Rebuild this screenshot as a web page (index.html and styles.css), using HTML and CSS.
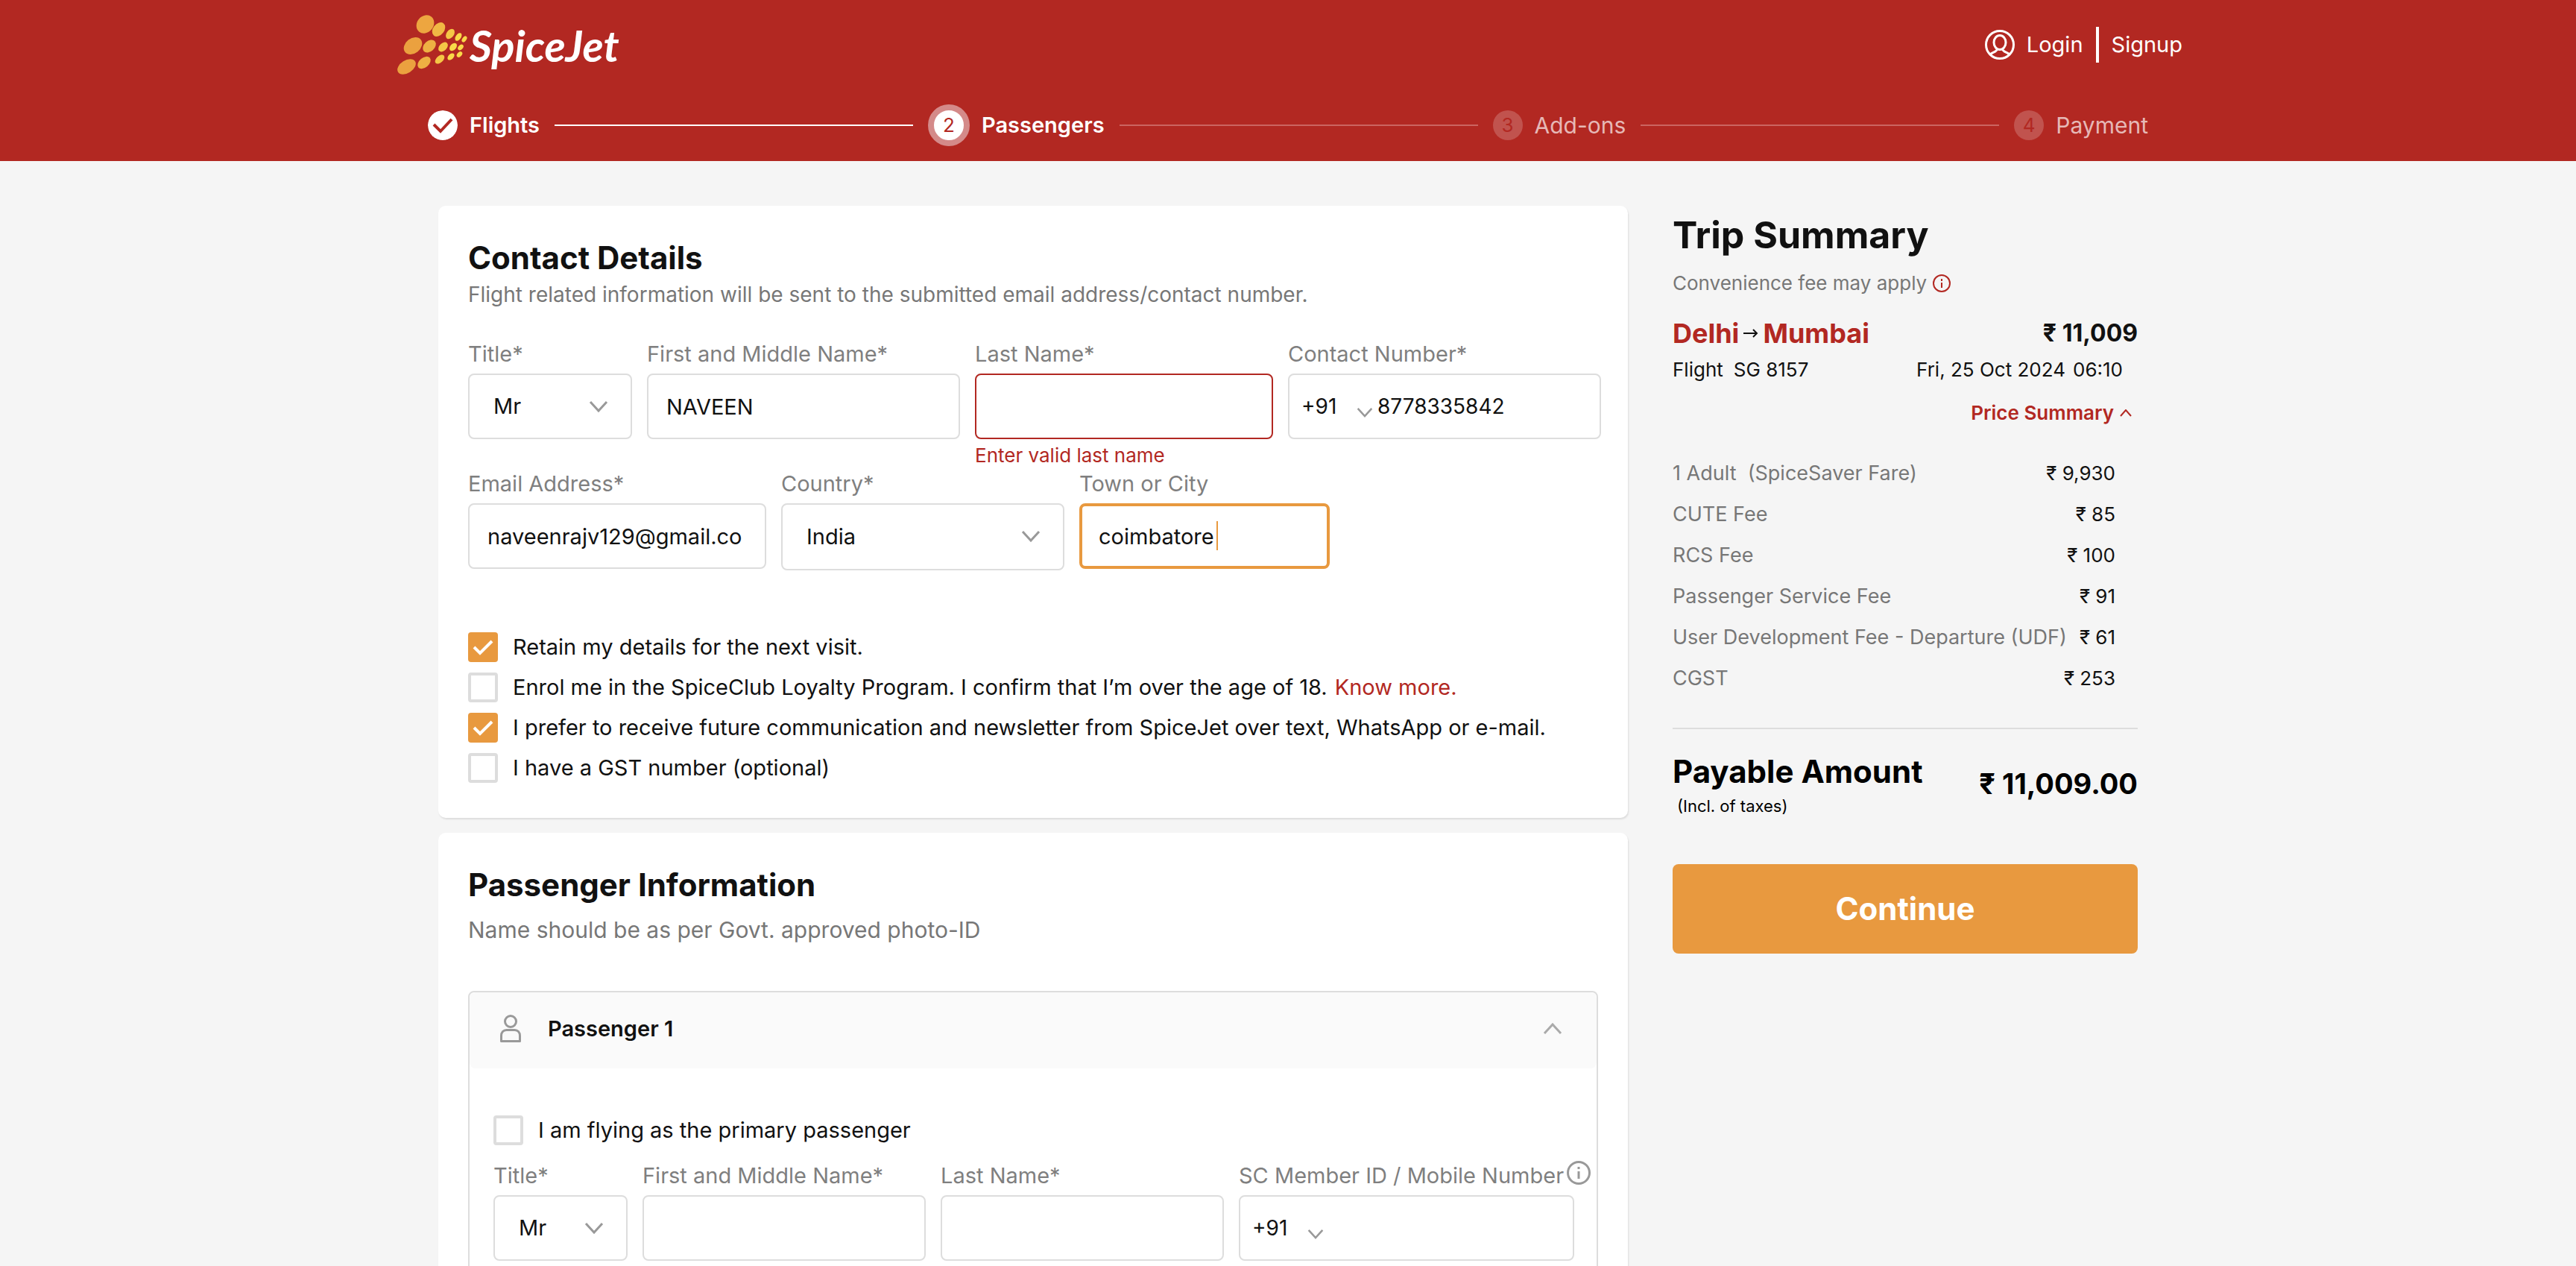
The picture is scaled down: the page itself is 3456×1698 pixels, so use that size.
FILE: index.html
```html
<!DOCTYPE html>
<html lang="en">
<head>
<meta charset="utf-8">
<title>SpiceJet - Passengers</title>
<link rel="stylesheet" href="styles.css">
</head>
<body>
<header class="site-header">
  <div class="topbar">
    <a class="logo" href="#" aria-label="SpiceJet home">
      <svg viewBox="0 0 300 96" aria-hidden="true">
        <g fill="#eba13f">
          <ellipse cx="38.500" cy="20.500" rx="13" ry="11" fill="#eda640" transform="rotate(-50 38.500 20.500)"/>
          <ellipse cx="22" cy="49.500" rx="13.500" ry="10" transform="rotate(-38 22 49.500)"/>
          <ellipse cx="13.500" cy="77.500" rx="13.500" ry="8.500" transform="rotate(-32 13.500 77.500)"/>
        </g>
        <g fill="#eeb043">
          <ellipse cx="56.500" cy="27.500" rx="10.500" ry="7.500" fill="#f1b844" transform="rotate(-52 56.500 27.500)"/>
          <ellipse cx="44" cy="50" rx="10" ry="7" transform="rotate(-42 44 50)"/>
          <ellipse cx="37" cy="72" rx="10" ry="6.500" transform="rotate(-40 37 72)"/>
        </g>
        <g fill="#f4c746">
          <ellipse cx="72" cy="33.500" rx="7.500" ry="5" transform="rotate(-55 72 33.500)"/>
          <ellipse cx="62.500" cy="51" rx="7.500" ry="5" transform="rotate(-45 62.500 51)"/>
          <ellipse cx="58" cy="67.500" rx="7.500" ry="4.500" transform="rotate(-42 58 67.500)"/>
        </g>
        <g fill="#f9d949">
          <ellipse cx="83" cy="37.500" rx="6" ry="3.500" transform="rotate(-55 83 37.500)"/>
          <ellipse cx="91" cy="40.500" rx="4.500" ry="2.800" transform="rotate(-55 91 40.500)"/>
          <ellipse cx="76" cy="51" rx="6" ry="4" transform="rotate(-48 76 51)"/>
          <ellipse cx="86" cy="51.500" rx="4.500" ry="3" transform="rotate(-48 86 51.500)"/>
          <ellipse cx="73" cy="64" rx="5.500" ry="3.500" transform="rotate(-45 73 64)"/>
          <ellipse cx="84.500" cy="61" rx="4.500" ry="3" transform="rotate(-48 84.500 61)"/>
        </g>
        <text class="logo-text" x="98" y="71">SpiceJet</text>
      </svg>
    </a>
    <nav class="account">
      <a class="account-link" href="#">
        <svg class="user-icon" viewBox="0 0 40 40" aria-hidden="true"><g fill="none" stroke="#fff" stroke-width="3"><circle cx="20" cy="20" r="18.500"/><ellipse cx="20" cy="17" rx="8" ry="9.500"/><path d="M7 33c3-3 9-3 10-8M33 33c-3-3-9-3-10-8"/></g></svg>
        Login
      </a>
      <span class="account-divider"></span>
      <a class="account-link" href="#">Signup</a>
    </nav>
  </div>
  <ol class="steps">
    <li class="step step-done">
      <svg class="step-dot" viewBox="0 0 40 40" aria-hidden="true"><circle cx="20" cy="20" r="20" fill="#fff"/><path d="M8 19l9 9 15-16" fill="none" stroke="#b22822" stroke-width="4"/></svg>
      <span class="step-name">Flights</span><span class="step-line"></span>
    </li>
    <li class="step step-current">
      <span class="step-dot">2</span><span class="step-name">Passengers</span><span class="step-line"></span>
    </li>
    <li class="step">
      <span class="step-dot">3</span><span class="step-name">Add-ons</span><span class="step-line"></span>
    </li>
    <li class="step step-last">
      <span class="step-dot">4</span><span class="step-name">Payment</span>
    </li>
  </ol>
</header>

<main class="layout">
  <form class="forms">
    <section class="card">
      <h2 class="card-title">Contact Details</h2>
      <p class="card-note">Flight related information will be sent to the submitted email address/contact number.</p>
      <div class="row row-contact">
        <div class="field">
          <label for="c-title">Title*</label>
          <div class="pick">
            <select class="control" id="c-title"><option>Mr</option></select>
            <svg class="chevron" viewBox="0 0 26 16" aria-hidden="true"><path d="M2 2l11 12L24 2"/></svg>
          </div>
        </div>
        <div class="field">
          <label for="c-first">First and Middle Name*</label>
          <input class="control" id="c-first" type="text" value="NAVEEN">
        </div>
        <div class="field">
          <label for="c-last">Last Name*</label>
          <input class="control control-invalid" id="c-last" type="text" value="" aria-describedby="c-last-error">
          <p class="field-error" id="c-last-error">Enter valid last name</p>
        </div>
        <div class="field">
          <label for="c-phone">Contact Number*</label>
          <div class="control phone">
            <div class="phone-code">
              <select aria-label="Country code"><option>+91</option></select>
              <svg class="chevron chevron-small" viewBox="0 0 26 16" aria-hidden="true"><path d="M2 2l11 12L24 2"/></svg>
            </div>
            <input id="c-phone" type="tel" value="8778335842">
          </div>
        </div>
      </div>
      <div class="row row-address">
        <div class="field">
          <label for="c-email">Email Address*</label>
          <input class="control" id="c-email" type="text" value="naveenrajv129@gmail.co">
        </div>
        <div class="field">
          <label for="c-country">Country*</label>
          <div class="pick">
            <select class="control control-country" id="c-country"><option>India</option></select>
            <svg class="chevron" viewBox="0 0 26 16" aria-hidden="true"><path d="M2 2l11 12L24 2"/></svg>
          </div>
        </div>
        <div class="field">
          <label for="c-town">Town or City</label>
          <div class="focus-box">
            <input class="control control-active" id="c-town" type="text" value="coimbatore">
            <span class="caret"></span>
          </div>
        </div>
      </div>
      <div class="checks">
        <label class="check"><input type="checkbox" checked>Retain my details for the next visit.</label>
        <div class="check"><input id="enrol" type="checkbox"><label for="enrol">Enrol me in the SpiceClub Loyalty Program. I confirm that I’m over the age of 18.</label><a class="more" href="#">Know more.</a></div>
        <label class="check"><input type="checkbox" checked>I prefer to receive future communication and newsletter from SpiceJet over text, WhatsApp or e-mail.</label>
        <label class="check"><input type="checkbox">I have a GST number (optional)</label>
      </div>
    </section>

    <section class="card">
      <h2 class="card-title">Passenger Information</h2>
      <p class="card-note card-note-large">Name should be as per Govt. approved photo-ID</p>
      <div class="passenger">
        <button class="passenger-head" type="button">
          <svg class="person-icon" viewBox="0 0 30 38" aria-hidden="true"><g fill="none" stroke="#999" stroke-width="3"><circle cx="15" cy="9" r="7.500"/><path d="M2.500 35.500v-7c0-5 3-8 7-8h11c4 0 7 3 7 8v7z" stroke-linejoin="round"/></g></svg>
          <span class="passenger-name">Passenger 1</span>
          <svg class="chevron chevron-light" viewBox="0 0 26 16" aria-hidden="true"><path d="M2 14L13 2l11 12"/></svg>
        </button>
        <div class="passenger-body">
          <label class="check"><input type="checkbox">I am flying as the primary passenger</label>
          <div class="row row-passenger">
            <div class="field">
              <label for="p-title">Title*</label>
              <div class="pick">
                <select class="control" id="p-title"><option>Mr</option></select>
                <svg class="chevron" viewBox="0 0 26 16" aria-hidden="true"><path d="M2 2l11 12L24 2"/></svg>
              </div>
            </div>
            <div class="field">
              <label for="p-first">First and Middle Name*</label>
              <input class="control" id="p-first" type="text">
            </div>
            <div class="field">
              <label for="p-last">Last Name*</label>
              <input class="control" id="p-last" type="text">
            </div>
            <div class="field">
              <label class="label-info" for="p-phone">SC Member ID / Mobile Number
                <svg class="info-large" viewBox="0 0 32 32" aria-hidden="true"><circle cx="16" cy="16" r="14.500" fill="none" stroke="#999" stroke-width="3"/><path d="M16 8v3M16 14v10" stroke="#999" stroke-width="3"/></svg>
              </label>
              <div class="control phone">
                <div class="phone-code">
                  <select aria-label="Country code"><option>+91</option></select>
                  <svg class="chevron chevron-small" viewBox="0 0 26 16" aria-hidden="true"><path d="M2 2l11 12L24 2"/></svg>
                </div>
                <input id="p-phone" type="tel">
              </div>
            </div>
          </div>
        </div>
      </div>
    </section>
  </form>

  <aside class="summary">
    <h1 class="summary-title">Trip Summary</h1>
    <p class="fee-note">Convenience fee may apply
      <svg class="info" viewBox="0 0 24 24" aria-hidden="true"><circle cx="12" cy="12" r="11" fill="none" stroke="#b22822" stroke-width="2"/><path d="M12 6v3M12 11v7" stroke="#b22822" stroke-width="2"/></svg>
    </p>
    <div class="route">
      <span class="route-city">Delhi</span>
      <svg class="arrow" viewBox="0 0 20 14" aria-hidden="true"><path d="M0 7h18M13 2l5 5-5 5" fill="none" stroke="#111" stroke-width="2"/></svg>
      <span class="route-city">Mumbai</span>
      <span class="route-price">₹ 11,009</span>
    </div>
    <div class="flight">
      <span>Flight</span><span class="flight-no">SG 8157</span>
      <span class="flight-date">Fri, 25 Oct 2024</span><span>06:10</span>
    </div>
    <button class="price-toggle" type="button">Price Summary
      <svg class="chevron-red" viewBox="0 0 16 10" aria-hidden="true"><path d="M1 9l7-8 7 8" fill="none" stroke="#b22822" stroke-width="2"/></svg>
    </button>
    <table class="prices">
      <tbody>
        <tr><th scope="row">1 Adult&nbsp; (SpiceSaver Fare)</th><td>₹ 9,930</td></tr>
        <tr><th scope="row">CUTE Fee</th><td>₹ 85</td></tr>
        <tr><th scope="row">RCS Fee</th><td>₹ 100</td></tr>
        <tr><th scope="row">Passenger Service Fee</th><td>₹ 91</td></tr>
        <tr><th scope="row">User Development Fee - Departure (UDF)</th><td>₹ 61</td></tr>
        <tr><th scope="row">CGST</th><td>₹ 253</td></tr>
      </tbody>
    </table>
    <div class="total">
      <div>
        <p class="total-name">Payable Amount</p>
        <p class="total-note">(Incl. of taxes)</p>
      </div>
      <span class="total-price">₹ 11,009.00</span>
    </div>
    <button class="continue" type="button">Continue</button>
  </aside>
</main>
</body>
</html>
```
FILE: styles.css
```css
* { box-sizing: border-box; }

body {
  margin: 0;
  background: #f5f5f5;
  color: #111;
  font-family: Inter, "Open Sans", sans-serif;
  font-size: 29px;
  line-height: 40px;
}

h1, h2, p, ol { margin: 0; padding: 0; }
button, input, select { font: inherit; color: inherit; }
a { text-decoration: none; }

/* Header */
.site-header { background: #b22822; color: #fff; }

.topbar {
  display: flex;
  align-items: center;
  justify-content: space-between;
  max-width: 2400px;
  height: 120px;
  margin: 0 auto;
  padding: 0 0 0 4px;
}
.logo svg { display: block; width: 300px; height: 96px; overflow: visible; }
.logo-text {
  fill: #fff;
  font: italic bold 58px Lato, sans-serif;
}
.account { display: flex; align-items: center; gap: 17px; }
.account-link { display: flex; align-items: center; gap: 16px; color: #fff; }
.user-icon { width: 40px; height: 40px; }
.account-divider { width: 4px; height: 48px; background: #fff; }

.steps {
  display: flex;
  max-width: 2308px;
  height: 96px;
  margin: 0 auto;
  list-style: none;
}
.step { display: flex; flex: 1 1 auto; align-items: center; gap: 16px; }
.step-last { flex: 0 0 auto; }
.step-dot {
  flex: none;
  width: 40px;
  height: 40px;
  border-radius: 50%;
  background: rgba(255, 255, 255, 0.2);
  color: #b22822;
  font-size: 26px;
  text-align: center;
}
.step-name { color: #e6b8b6; font-size: 30px; }
.step-line { flex: 1; height: 2px; margin: 0 20px 0 4px; background: #cb6561; }
.step-done .step-name, .step-current .step-name { color: #fff; font-size: 29px; font-weight: 600; }
.step-done .step-line { background: #fff; }
.step-current .step-dot {
  width: 56px;
  height: 56px;
  border: 8px solid #d48a89;
  background: #fff;
}

/* Page columns */
.layout {
  display: grid;
  grid-template-columns: minmax(0, 1596fr) minmax(0, 624fr);
  column-gap: 60px;
  max-width: 2280px;
  margin: 0 auto;
  padding: 60px 0;
}
.forms { display: grid; gap: 20px; }
.card {
  padding: 40px 36px 47px 40px;
  border-radius: 10px;
  background: #fff;
  box-shadow: 1px 2px 2px #ddd;
}
.card-title { font-size: 42px; font-weight: 700; line-height: 60px; }
.card-note { color: #777; font-size: 28px; line-height: 38px; }
.card-note-large { margin-top: 10px; font-size: 30px; line-height: 40px; }

/* Fields */
.row { display: grid; gap: 20px; align-items: start; }
.row-contact { grid-template-columns: 220fr 420fr 400fr 420fr; margin-top: 41px; }
.row-address { grid-template-columns: 400fr 380fr 336fr 344fr; }
.row-passenger { grid-template-columns: 180fr 380fr 380fr 450fr; margin-top: 21px; }
.field { min-width: 0; }
.field label { display: block; margin-bottom: 6px; color: #7f7f7f; white-space: nowrap; }
.control {
  display: block;
  width: 100%;
  height: 88px;
  padding: 0 24px;
  border: 2px solid #ddd;
  border-radius: 8px;
  outline: 0;
  background: #fff;
}
.control-invalid { border-color: #b22822; }
.control-active { padding: 0 22px; border: 4px solid #e8993f; }
.control-country { height: 90px; }
.field-error { margin-top: 4px; color: #b22822; font-size: 26px; line-height: 36px; }
.focus-box { position: relative; }
.caret {
  position: absolute;
  top: 24px;
  left: 184px;
  width: 2px;
  height: 39px;
  background: #e8993f;
}

.pick { position: relative; }
.pick .control { padding: 0 32px; appearance: none; }
.pick .chevron { position: absolute; top: 36px; right: 32px; }
.chevron { width: 26px; height: 16px; fill: none; stroke: #999; stroke-width: 3; }
.chevron-light { stroke: #aaa; }
.chevron-small { width: 22px; height: 14px; }

.phone { display: flex; align-items: center; padding: 0 16px; font-size: 28px; }
.phone select, .phone input { border: 0; outline: 0; background: none; }
.phone-code { display: flex; flex: none; align-items: center; width: 96px; }
.phone-code select { width: 74px; padding: 0; appearance: none; }
.phone-code .chevron { margin-top: 16px; }
.phone input { flex: 1; min-width: 0; padding: 0 0 0 6px; }

/* Tick boxes */
.checks { display: grid; gap: 14px; margin-top: 83px; }
.check { display: flex; align-items: center; gap: 20px; }
.check input {
  flex: none;
  width: 40px;
  height: 40px;
  margin: 0;
  border: 4px solid #ddd;
  border-radius: 4px;
  background: #fff;
  appearance: none;
}
.check input:checked {
  border: 0;
  background: #e8993f url("data:image/svg+xml,%3Csvg xmlns='http://www.w3.org/2000/svg' viewBox='0 0 40 40'%3E%3Cpath d='M8 20l8 8 16-16' fill='none' stroke='white' stroke-width='4'/%3E%3C/svg%3E");
}
.more { margin-left: -10px; color: #b22822; }

/* Passenger panel */
.passenger { margin: 62px 4px 0 0; border: 2px solid #ddd; border-radius: 8px; }
.passenger-head {
  display: flex;
  align-items: center;
  width: 100%;
  height: 102px;
  padding: 0 46px 4px 40px;
  border: 0;
  border-radius: 8px;
  background: #fafafa;
  font-weight: 600;
}
.person-icon { width: 30px; height: 38px; margin-right: 35px; }
.passenger-head .chevron { margin-left: auto; }
.passenger-body { padding: 63px 30px 40px 32px; }
.field .label-info { display: flex; align-items: flex-start; gap: 4px; }
.info-large { flex: none; width: 32px; height: 32px; }

/* Trip summary */
.summary { padding-top: 4px; }
.summary-title { font-size: 50px; font-weight: 700; line-height: 70px; }
.fee-note {
  display: flex;
  align-items: center;
  gap: 8px;
  color: #777;
  font-size: 26px;
  line-height: 60px;
}
.info { width: 24px; height: 24px; }
.route {
  display: flex;
  align-items: center;
  gap: 6px;
  margin-top: 8px;
  font-weight: 700;
  line-height: 58px;
}
.route-city { color: #b22822; font-size: 36px; }
.arrow { width: 20px; height: 14px; }
.route-price { margin-left: auto; font-size: 32px; }
.flight { display: flex; padding-right: 20px; font-size: 26px; }
.flight-no { margin-left: 14px; }
.flight-date { margin: 0 10px 0 auto; }
.price-toggle {
  display: flex;
  align-items: center;
  gap: 8px;
  margin: 18px 8px 0 auto;
  padding: 0;
  border: 0;
  background: none;
  color: #b22822;
  font-size: 26px;
  font-weight: 600;
  line-height: 40px;
}
.chevron-red { width: 16px; height: 10px; }
.prices {
  display: block;
  margin-top: 33px;
  padding-right: 30px;
  line-height: 55px;
  white-space: nowrap;
}
.prices tbody { display: block; }
.prices tr { display: flex; justify-content: space-between; }
.prices th { padding: 0; color: #777; font-size: 27px; font-weight: 400; text-align: left; }
.prices td { padding: 0; font-size: 26px; text-align: right; }
.total {
  display: flex;
  align-items: center;
  justify-content: space-between;
  margin-top: 39px;
  padding-top: 27px;
  border-top: 2px solid #ddd;
  color: #000;
}
.total-name, .total-price { font-size: 42px; font-weight: 700; line-height: 60px; }
.total-price { font-size: 38px; }
.total-note { padding-left: 6px; font-size: 22px; line-height: 32px; }
.continue {
  display: block;
  width: 100%;
  height: 120px;
  margin-top: 62px;
  border: 0;
  border-radius: 8px;
  background: #e8993f;
  color: #fff;
  font-size: 42px;
  font-weight: 700;
}
```
